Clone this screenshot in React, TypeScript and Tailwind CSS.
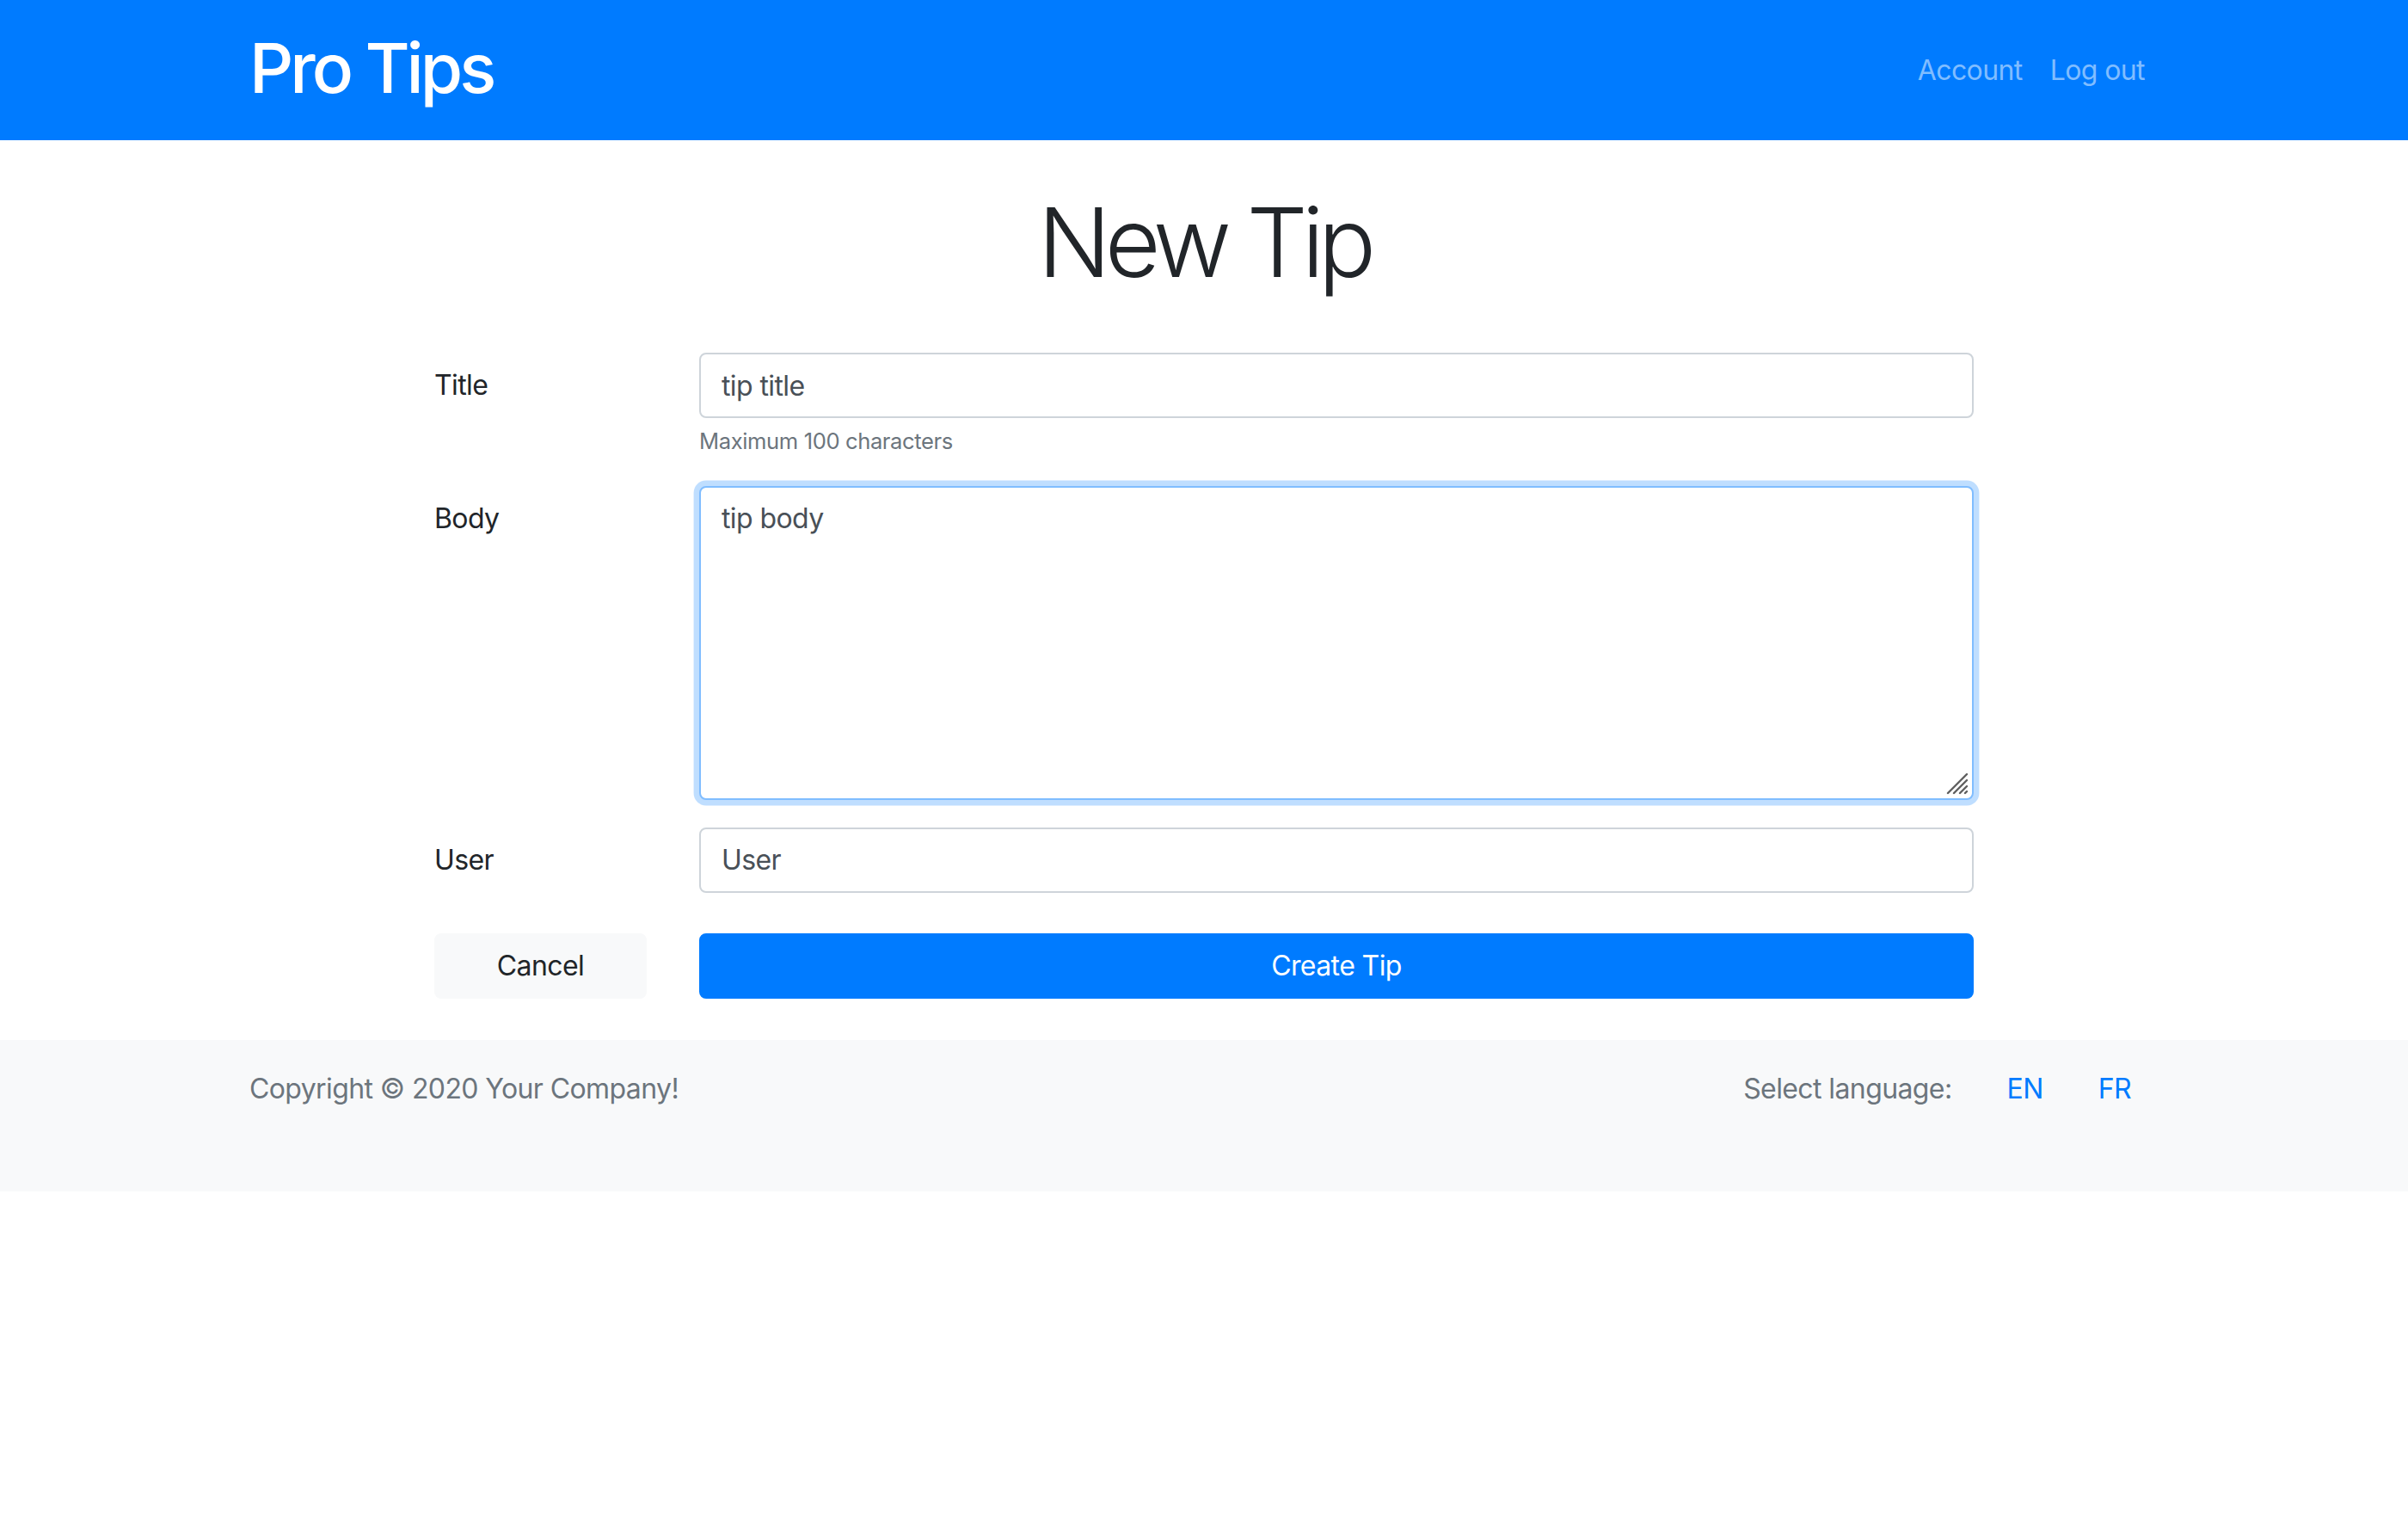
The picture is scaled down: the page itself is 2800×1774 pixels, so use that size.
import React from "react";

export default function App() {
  return (
    <div className="min-h-screen bg-white font-['Inter','Liberation_Sans',sans-serif] tracking-[-0.6px] text-[#212529]">
      <nav className="h-[163px] bg-[#007bff]">
        <div className="mx-auto flex h-full w-[2280px] items-center justify-between px-[30px]">
          <a className="-mt-[6px] text-[80px] font-medium leading-none tracking-[-4px] text-white">Pro Tips</a>
          <div className="flex items-center">
            <a className="px-[16px] text-[32px] leading-[48px] text-[#80bdff]">Account</a>
            <a className="px-[16px] text-[32px] leading-[48px] text-[#80bdff]">Log out</a>
          </div>
        </div>
      </nav>

      <main>
        <h1 className="mt-[51px] text-center text-[112px] font-light leading-[1.2] tracking-[-7px] text-[#212529]">New Tip</h1>

        <form className="mx-auto mt-[62px] w-[1790px]">
          <div className="flex">
            <label className="w-[308px] shrink-0 pt-[14px] text-[32px] leading-[48px]">Title</label>
            <div className="flex-1">
              <input
                readOnly
                defaultValue="tip title"
                className="block h-[76px] w-full rounded-[8px] border-2 border-[#ced4da] bg-white px-[24px] text-[32px] text-[#495057] outline-none"
              />
              <small className="mt-[8px] block text-[25.6px] leading-[38.4px] tracking-[-0.4px] text-[#6c757d]">Maximum 100 characters</small>
            </div>
          </div>

          <div className="mt-[32px] flex">
            <label className="w-[308px] shrink-0 pt-[14px] text-[32px] leading-[48px]">Body</label>
            <div className="relative flex-1">
              <textarea
                readOnly
                defaultValue="tip body"
                className="block h-[365px] w-full resize-none rounded-[8px] border-2 border-[#80bdff] bg-white px-[24px] py-[12px] text-[32px] leading-[48px] text-[#495057] shadow-[0_0_0_6.4px_rgba(0,123,255,0.25)] outline-none"
              />
              <svg className="absolute bottom-[6px] right-[6px] h-[26px] w-[26px]" viewBox="0 0 26 26">
                <g stroke="#5f5f5f" strokeWidth="2.4" strokeLinecap="round">
                  <line x1="2" y1="24" x2="24" y2="2" />
                  <line x1="9" y1="24" x2="24" y2="9" />
                  <line x1="16" y1="24" x2="24" y2="16" />
                  <line x1="22" y1="24" x2="24" y2="22" />
                </g>
              </svg>
            </div>
          </div>

          <div className="mt-[32px] flex">
            <label className="w-[308px] shrink-0 pt-[14px] text-[32px] leading-[48px]">User</label>
            <div className="flex-1">
              <input
                readOnly
                defaultValue="User"
                className="block h-[76px] w-full rounded-[8px] border-2 border-[#ced4da] bg-white px-[24px] text-[32px] text-[#495057] outline-none"
              />
            </div>
          </div>

          <div className="mt-[47px] flex">
            <div className="w-[308px] shrink-0">
              <button
                type="button"
                className="h-[76px] w-[247px] rounded-[8px] border-2 border-[#f8f9fa] bg-[#f8f9fa] text-[32px] text-[#212529]"
              >
                Cancel
              </button>
            </div>
            <button
              type="button"
              className="h-[76px] flex-1 rounded-[8px] border-2 border-[#007bff] bg-[#007bff] text-[32px] text-white"
            >
              Create Tip
            </button>
          </div>
        </form>
      </main>

      <footer className="mt-[48px] h-[176px] bg-[#f8f9fa] pt-[33px]">
        <div className="mx-auto flex w-[2280px] items-center justify-between px-[30px] text-[32px] leading-[48px]">
          <span className="text-[#6c757d]">Copyright © 2020 Your Company!</span>
          <div className="flex items-center">
            <span className="mr-[32px] text-[#6c757d]">Select language:</span>
            <a className="px-[32px] text-[#007bff]">EN</a>
            <a className="px-[32px] text-[#007bff]">FR</a>
          </div>
        </div>
      </footer>
    </div>
  );
}
